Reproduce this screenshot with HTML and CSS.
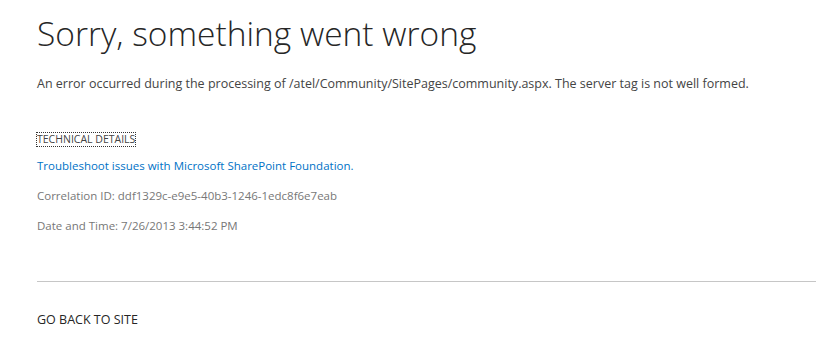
FILE: index.html
```html
<!DOCTYPE html>
<html lang="en">
<head>
    <meta charset="UTF-8">
    <title>Error</title>
    <link rel="stylesheet" href="styles.css">
</head>
<body>
    <div class="page">
        <h1 class="title">Sorry, something went wrong</h1>
        <p class="message">An error occurred during the processing of /atel/Community/SitePages/community.aspx. The server tag is not well formed.</p>

        <div class="details">
            <a class="details-toggle" href="#">TECHNICAL DETAILS</a>
            <p><a class="help-link" href="#">Troubleshoot issues with Microsoft SharePoint Foundation.</a></p>
            <p class="meta">Correlation ID: ddf1329c-e9e5-40b3-1246-1edc8f6e7eab</p>
            <p class="meta">Date and Time: 7/26/2013 3:44:52 PM</p>
        </div>
    </div>

    <div class="footer">
        <a class="back" href="#">GO BACK TO SITE</a>
    </div>
</body>
</html>
```

FILE: styles.css
```css
body {
    font-family: 'Open Sans', 'Noto Sans', sans-serif;
    margin: 0;
    padding: 0;
    background: white;
    color: #444;
}

.page {
    padding: 10px 0 0 37px;
}

.title {
    font-size: 33.5px;
    font-weight: 300;
    color: #262626;
    margin: 0;
    line-height: 46px;
}

.message {
    font-size: 12.5px;
    margin: 19px 0 0 0;
    color: #444;
}

.details {
    margin-top: 34px;
}
.details p {
    margin: 0;
    font-size: 11.5px;
    line-height: 30px;
}

.details-toggle {
    display: inline-block;
    font-size: 10.5px;
    color: #444;
    text-decoration: none;
    outline: 1px dotted #333;
    line-height: 13px;
    margin-bottom: 5px;
}

.help-link {
    color: #0072c6;
    text-decoration: none;
}

.meta {
    color: #777;
}

.footer {
    margin: 40px 0 0 37px;
    border-top: 1px solid #c6c6c6;
    padding-top: 25px;
}

.back {
    font-size: 12.5px;
    color: #262626;
    text-decoration: none;
}
```
